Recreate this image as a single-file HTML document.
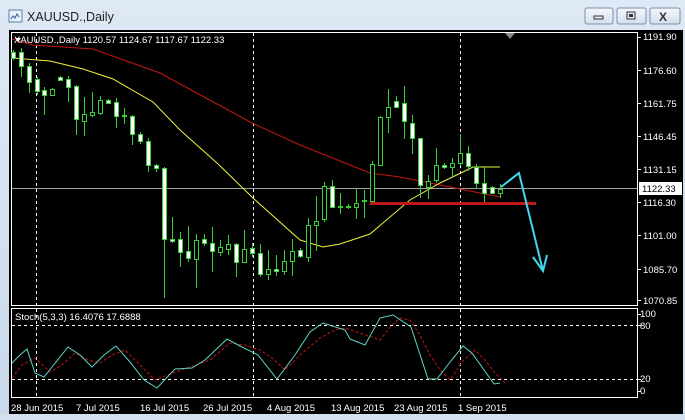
<!DOCTYPE html>
<html><head><meta charset="utf-8"><style>
html,body{margin:0;padding:0;width:685px;height:420px;overflow:hidden;background:#d3e0ee;font-family:"Liberation Sans",sans-serif}
svg{position:absolute;left:0;top:0}
</style></head><body>
<svg width="685" height="420" xmlns="http://www.w3.org/2000/svg" font-family="Liberation Sans, sans-serif">
<defs><linearGradient id="tb" x1="0" y1="0" x2="0" y2="1"><stop offset="0" stop-color="#dfe9f5"/><stop offset="1" stop-color="#c9d9ea"/></linearGradient>
<linearGradient id="bt" x1="0" y1="0" x2="0" y2="1"><stop offset="0" stop-color="#f4f7fb"/><stop offset="1" stop-color="#d4dfec"/></linearGradient></defs>
<rect width="685" height="420" fill="url(#tb)"/>
<!-- title -->
<rect x="9" y="10" width="13" height="12" fill="#e8f0f8" stroke="#5a7fa8"/>
<path d="M11 19 l2-3 2 2 2-4 2 3" stroke="#2a5c9a" fill="none"/>
<text x="27" y="21" font-size="12.5" fill="#1e1e1e">XAUUSD.,Daily</text>
<g stroke="#7a8ea6" fill="url(#bt)"><rect x="585" y="8" width="28" height="16" rx="2"/><rect x="617" y="8" width="29" height="16" rx="2"/><rect x="650" y="8" width="30" height="16" rx="2"/></g>
<rect x="594" y="16" width="9" height="3" fill="none" stroke="#333"/>
<rect x="627" y="12" width="8" height="7" fill="none" stroke="#333"/><rect x="629" y="14" width="4" height="3" fill="#333"/>
<text x="659" y="21" font-size="12" font-weight="bold" fill="#333">X</text>
<!-- chart -->
<rect x="9" y="30" width="675" height="385" fill="#000"/>
<rect x="11.5" y="32.5" width="626" height="273" fill="none" stroke="#fff"/>
<rect x="11.5" y="308.5" width="626" height="89" fill="none" stroke="#fff"/>
<g stroke="#fff" stroke-dasharray="3,3"><line x1="36.5" y1="33" x2="36.5" y2="397"/><line x1="253.5" y1="33" x2="253.5" y2="397"/><line x1="460.5" y1="33" x2="460.5" y2="397"/>
<line x1="12" y1="325.5" x2="637" y2="325.5"/><line x1="12" y1="379.5" x2="637" y2="379.5"/></g>
<path d="M505 33 h10 l-5 6z" fill="#888"/>
<line x1="12" y1="188.5" x2="637" y2="188.5" stroke="#a0a0a0"/>
<!-- MAs -->
<polyline fill="none" stroke="#c41414" points="12,39 33,45 93,49 160,73 252,123 300,145 350,165 370,173 400,177 440,185 500,197"/>
<polyline fill="none" stroke="#f0f040" points="12,58 50,61 83,69 113,79 153,102 180,130 217,163 253,198 300,240 323,247 340,244 370,234 410,200 440,183 467,170 473,167 500,167"/>
<!-- candles -->
<g stroke="#3ad03a" stroke-width="1">
<path d="M13.5 50v10M21.5 48v29M29.5 63v30M37.5 77v18M44.5 87v28M52.5 88v8M60.5 76v5M68.5 76v26M76.5 85v50M84.5 97v39M92.5 92v25M100.5 96v19M108.5 99v5M116.5 98v30M124.5 108v16M132.5 115v30M140.5 132v12M148.5 138v34M156.5 164v8M164.5 167v131M172.5 217v26M180.5 232v35M188.5 226v36M196.5 234v54M204.5 234v12M212.5 227v45M220.5 240v16M228.5 235v20M236.5 243v34M244.5 230v22M252.5 243v14M260.5 244v33M268.5 250v30M276.5 255v21M284.5 250v25M292.5 239v37M300.5 248v10M308.5 218v44M316.5 196v55M324.5 182v40M332.5 180v28M340.5 193v21M348.5 204v5M356.5 189v30M364.5 190v28M372.5 161v42M380.5 116v50M388.5 89v44M396.5 96v12M404.5 86v53M412.5 115v39M420.5 138v60M428.5 175v24M436.5 148v35M444.5 163v6M452.5 158v19M460.5 134v32M468.5 146v25M476.5 164v25M484.5 166v37M492.5 186v8M500.5 184v14"/>
</g>
<g fill="#fff" stroke="#3ad03a">
<rect x="11.5" y="52.5" width="4" height="6"/><rect x="19.5" y="52.5" width="4" height="14"/><rect x="27.5" y="66.5" width="4" height="16"/><rect x="35.5" y="79.5" width="4" height="12"/><rect x="42.5" y="90.5" width="4" height="5"/><rect x="50.5" y="89.5" width="4" height="6" fill="#000"/><rect x="58.5" y="77.5" width="4" height="3"/><rect x="66.5" y="79.5" width="4" height="8"/><rect x="74.5" y="86.5" width="4" height="33"/><rect x="82.5" y="114.5" width="4" height="7" fill="#000"/><rect x="90.5" y="112.5" width="4" height="3" fill="#000"/><rect x="98.5" y="100.5" width="4" height="13" fill="#000"/><rect x="106.5" y="100.5" width="4" height="3"/><rect x="114.5" y="102.5" width="4" height="14"/><rect x="122.5" y="115.5" width="4" height="1"/><rect x="130.5" y="116.5" width="4" height="18"/><rect x="138.5" y="134.5" width="4" height="7"/><rect x="146.5" y="141.5" width="4" height="24"/><rect x="154.5" y="165.5" width="4" height="3"/><rect x="162.5" y="168.5" width="4" height="71"/><rect x="170.5" y="239.5" width="4" height="2"/><rect x="178.5" y="239.5" width="4" height="13"/><rect x="186.5" y="251.5" width="4" height="7"/><rect x="194.5" y="240.5" width="4" height="19" fill="#000"/><rect x="202.5" y="239.5" width="4" height="4"/><rect x="210.5" y="243.5" width="4" height="8"/><rect x="218.5" y="247.5" width="4" height="5" fill="#000"/><rect x="226.5" y="244.5" width="4" height="5" fill="#000"/><rect x="234.5" y="244.5" width="4" height="18"/><rect x="242.5" y="249.5" width="4" height="13" fill="#000"/><rect x="250.5" y="248.5" width="4" height="5"/><rect x="258.5" y="253.5" width="4" height="21"/><rect x="266.5" y="269.5" width="4" height="5" fill="#000"/><rect x="274.5" y="269.5" width="4" height="2"/><rect x="282.5" y="261.5" width="4" height="10" fill="#000"/><rect x="290.5" y="251.5" width="4" height="10" fill="#000"/><rect x="298.5" y="250.5" width="4" height="6"/><rect x="306.5" y="225.5" width="4" height="32" fill="#000"/><rect x="314.5" y="221.5" width="4" height="4" fill="#000"/><rect x="322.5" y="186.5" width="4" height="33" fill="#000"/><rect x="330.5" y="186.5" width="4" height="21"/><rect x="338.5" y="206.5" width="4" height="1"/><rect x="346.5" y="206.5" width="4" height="1"/><rect x="354.5" y="203.5" width="4" height="4" fill="#000"/><rect x="362.5" y="200.5" width="4" height="1"/><rect x="370.5" y="164.5" width="4" height="37" fill="#000"/><rect x="378.5" y="117.5" width="4" height="48" fill="#000"/><rect x="386.5" y="107.5" width="4" height="10" fill="#000"/><rect x="394.5" y="101.5" width="4" height="6"/><rect x="402.5" y="103.5" width="4" height="18"/><rect x="410.5" y="123.5" width="4" height="15"/><rect x="418.5" y="138.5" width="4" height="47"/><rect x="426.5" y="181.5" width="4" height="6" fill="#000"/><rect x="434.5" y="165.5" width="4" height="15" fill="#000"/><rect x="442.5" y="165.5" width="4" height="2"/><rect x="450.5" y="163.5" width="4" height="4" fill="#000"/><rect x="458.5" y="153.5" width="4" height="10" fill="#000"/><rect x="466.5" y="153.5" width="4" height="13"/><rect x="474.5" y="167.5" width="4" height="16"/><rect x="482.5" y="183.5" width="4" height="10"/><rect x="490.5" y="187.5" width="4" height="6"/><rect x="498.5" y="189.5" width="4" height="4" fill="#000"/>
</g>
<line x1="370" y1="203.5" x2="536" y2="203.5" stroke="#c01818" stroke-width="3"/>
<g fill="none" stroke="#3fd8f0" stroke-width="2"><polyline points="501,187 519,173 543,271"/><polyline points="533,257 543,271 547,255"/></g>
<!-- axis -->
<g fill="#fff" font-size="9.5">
<text x="14" y="43" font-size="9.5">XAUUSD.,Daily  1120.57 1124.67 1117.67 1122.33</text>
<path d="M15 38 h6 l-3 4z"/>
<text x="643" y="40">1191.90</text><text x="643" y="74">1176.60</text><text x="643" y="107">1161.75</text><text x="643" y="140">1146.45</text><text x="643" y="173">1131.15</text><text x="643" y="206">1116.30</text><text x="643" y="239">1101.00</text><text x="643" y="273">1085.70</text><text x="643" y="304">1070.85</text>
<text x="640" y="317">100</text><text x="640" y="329">80</text><text x="640" y="382">20</text><text x="640" y="394">0</text>
<text x="15" y="320">Stoch(5,3,3) 16.4076 17.6888</text>
<text x="11" y="411">28 Jun 2015</text><text x="76" y="411">7 Jul 2015</text><text x="140" y="411">16 Jul 2015</text><text x="203" y="411">26 Jul 2015</text><text x="267" y="411">4 Aug 2015</text><text x="331" y="411">13 Aug 2015</text><text x="394" y="411">23 Aug 2015</text><text x="458" y="411">1 Sep 2015</text>
</g>
<g stroke="#fff"><path d="M638 37.5h3M638 70.5h3M638 103.5h3M638 136.5h3M638 169.5h3M638 202.5h3M638 235.5h3M638 269.5h3M638 300.5h3M638 314.5h3M638 325.5h3M638 379.5h3M638 391.5h3"/></g>
<rect x="639" y="182" width="43" height="13" fill="#fff"/>
<text x="642" y="192" font-size="9.5" fill="#000">1122.33</text>
<!-- stoch -->
<polyline fill="none" stroke="#c41414" stroke-dasharray="3,2" points="12,378 22,365 35,358 50,372 62,365 75,353 88,360 100,363 112,355 125,350 140,365 155,380 170,374 190,367 210,360 230,343 245,345 260,350 272,358 285,370 300,355 320,338 335,330 345,328 360,333 380,340 392,325 400,318 410,320 420,335 430,355 440,370 450,380 462,362 475,350 485,360 495,373 505,383"/>
<polyline fill="none" stroke="#5fd4c4" points="12,363 20,355 27,349 35,373 44,377 68,347 80,355 92,367 104,355 116,346 130,362 144,380 157,388 175,369 192,368 205,360 227,339 240,346 258,355 277,379 295,355 310,332 323,323 345,330 350,339 365,345 380,318 393,315 411,327 428,379 437,379 450,362 463,346 472,353 494,384 500,383"/>
<rect x="683" y="30" width="2" height="390" fill="#d3e0ee"/>
<rect x="0" y="414" width="685" height="6" fill="#d3e0ee"/>
</svg>
</body></html>
